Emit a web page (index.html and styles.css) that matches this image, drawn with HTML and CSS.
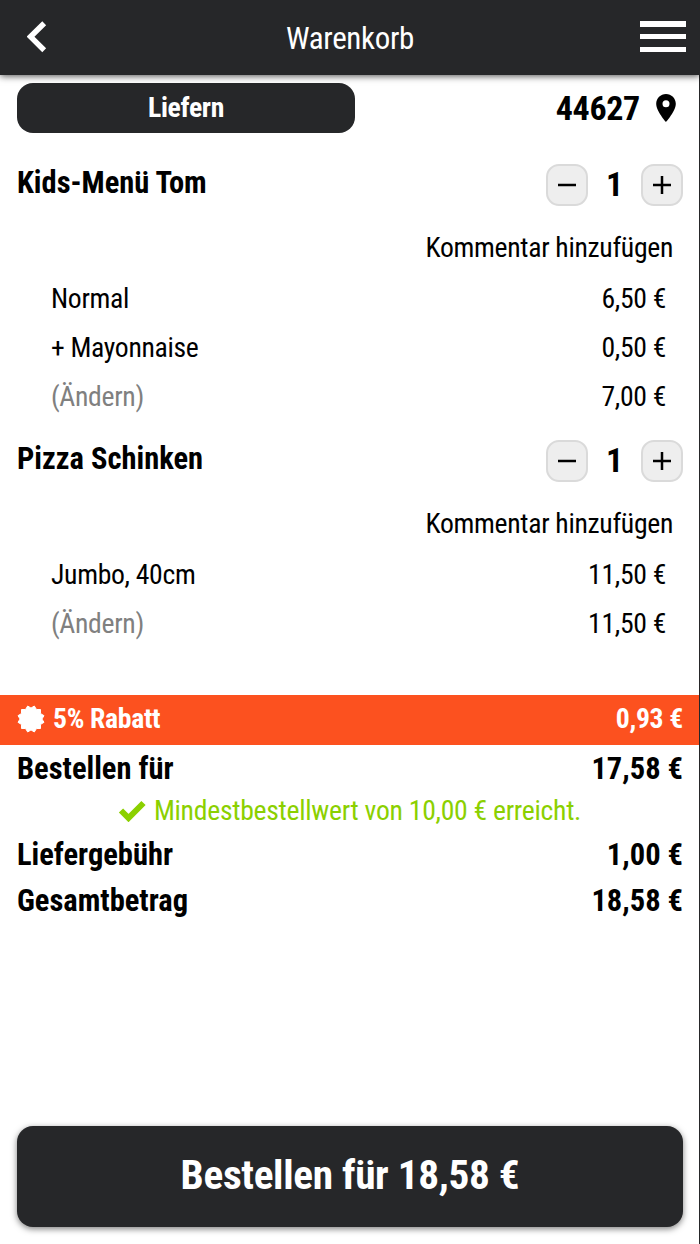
FILE: index.html
```html
<!DOCTYPE html>
<html lang="de">

<head>
    <meta charset="UTF-8">
    <meta name="viewport" content="width=device-width, initial-scale=1.0">
    <title>Warenkorb</title>
    <link rel="stylesheet" href="styles.css">
</head>

<body>
    <header class="header">
        <svg class="back" viewBox="0 0 20 32"><path d="M17.200 2.200L3.500 15.700l13.700 13.500" /></svg>
        <h1>Warenkorb</h1>
        <div class="menu"><i></i><i></i><i></i></div>
    </header>

    <main class="cart">
        <div class="delivery">
            <button class="mode">Liefern</button>
            <div class="zip">
                <span>44627</span>
                <svg class="pin" viewBox="5 2 14 20"><path d="M12 2C8.130 2 5 5.130 5 9c0 5.250 7 13 7 13s7-7.750 7-13c0-3.870-3.130-7-7-7zm0 9.500a2.500 2.500 0 1 1 0-5 2.500 2.500 0 0 1 0 5z" /></svg>
            </div>
        </div>

        <section class="item">
            <div class="item-head">
                <h2>Kids-Menü Tom</h2>
                <div class="qty">
                    <button class="step"><svg viewBox="0 0 18 18"><path d="M0 9h18" /></svg></button>
                    <span class="count">1</span>
                    <button class="step"><svg viewBox="0 0 18 18"><path d="M0 9h18M9 0v18" /></svg></button>
                </div>
            </div>
            <div class="comment">Kommentar hinzufügen</div>
            <div class="option"><span>Normal</span><span>6,50 €</span></div>
            <div class="option"><span>+ Mayonnaise</span><span>0,50 €</span></div>
            <div class="option"><span class="change">(Ändern)</span><span>7,00 €</span></div>
        </section>

        <section class="item">
            <div class="item-head">
                <h2>Pizza Schinken</h2>
                <div class="qty">
                    <button class="step"><svg viewBox="0 0 18 18"><path d="M0 9h18" /></svg></button>
                    <span class="count">1</span>
                    <button class="step"><svg viewBox="0 0 18 18"><path d="M0 9h18M9 0v18" /></svg></button>
                </div>
            </div>
            <div class="comment">Kommentar hinzufügen</div>
            <div class="option"><span>Jumbo, 40cm</span><span>11,50 €</span></div>
            <div class="option"><span class="change">(Ändern)</span><span>11,50 €</span></div>
        </section>

        <div class="discount">
            <svg class="badge" viewBox="-14 -14 28 28"><path d="M0-10.900L3.300-13 5.500-9.500 9.500-9.500 9.500-5.500 13-3.300 10.900 0 13 3.300 9.500 5.500 9.500 9.500 5.500 9.500 3.300 13 0 10.900-3.300 13-5.500 9.500-9.500 9.500-9.500 5.500-13 3.300-10.900 0-13-3.300-9.500-5.500-9.500-9.500-5.500-9.500-3.300-13z" /></svg>
            <span>5% Rabatt</span>
            <span class="amount">0,93 €</span>
        </div>

        <div class="totals">
            <div class="sum"><span>Bestellen für</span><span>17,58 €</span></div>
            <div class="minimum">
                <svg class="check" viewBox="0 0 28 22"><path d="M3 10.500l7.500 7.500L25.500 3" /></svg>
                <span>Mindestbestellwert von 10,00 € erreicht.</span>
            </div>
            <div class="sum"><span>Liefergebühr</span><span>1,00 €</span></div>
            <div class="sum"><span>Gesamtbetrag</span><span>18,58 €</span></div>
        </div>

        <button class="order">Bestellen für 18,58 €</button>
    </main>
</body>

</html>
```
FILE: styles.css
```css
* {
    box-sizing: border-box;
}

body {
    margin: 0;
    height: 1244px;
    display: flex;
    flex-direction: column;
    background: #fff;
    color: #000;
    font-family: "Roboto Condensed", Roboto, sans-serif;
    font-stretch: 75%;
    font-weight: 440;
    font-size: 27.700px;
    letter-spacing: -0.320px;
    line-height: 1.2;
    white-space: nowrap;
}

h1, h2 {
    margin: 0;
}

button {
    font: inherit;
    font-stretch: 75%;
    letter-spacing: inherit;
    border: none;
    padding: 0;
}

.header {
    position: relative;
    z-index: 1;
    height: 74.500px;
    padding: 0 14px 0 27px;
    display: flex;
    align-items: center;
    justify-content: space-between;
    background: #262729;
    color: #fff;
    box-shadow: 0 1px 7px rgba(0, 0, 0, 0.7);
}

.header h1 {
    font-size: 31px;
    font-weight: 440;
    padding: 2px 0 0 13px;
}

.back {
    width: 20px;
    height: 32px;
    fill: none;
    stroke: #fff;
    stroke-width: 5.500;
}

.menu {
    width: 46px;
    display: flex;
    flex-direction: column;
    gap: 7.200px;
    padding-bottom: 1px;
}

.menu i {
    height: 5.400px;
    background: #fff;
}

.cart {
    flex: 1;
    display: flex;
    flex-direction: column;
    border-right: 1px solid #262729;
    padding-top: 8.500px;
}

.delivery {
    height: 50px;
    margin: 0 23px 31px 17px;
    display: flex;
    align-items: center;
    justify-content: space-between;
}

.mode {
    width: 338px;
    height: 50px;
    border-radius: 16px;
    background: #262729;
    color: #fff;
    font-weight: 700;
}

.zip {
    display: flex;
    align-items: center;
    gap: 16px;
    font-size: 34px;
    font-weight: 700;
}

.pin {
    width: 20px;
    height: 28px;
}

.item {
    padding: 0 16px 0 17px;
    margin-bottom: 18.500px;
}

.item-head {
    display: flex;
    justify-content: space-between;
    height: 42px;
}

.item-head h2 {
    padding-top: 1px;
    font-size: 30.500px;
    font-weight: 700;
    letter-spacing: 0;
}

.qty {
    display: flex;
    align-items: center;
}

.step {
    width: 42px;
    height: 42px;
    display: flex;
    align-items: center;
    justify-content: center;
    border: 2px solid #dadada;
    border-radius: 13px;
    background: #eee;
}

.step svg {
    width: 18px;
    height: 18px;
    stroke: #000;
    stroke-width: 2.500;
}

.count {
    width: 53px;
    padding-bottom: 1px;
    text-align: center;
    font-size: 34px;
    font-weight: 700;
}

.comment {
    height: 50px;
    margin: 17px 10px 1px 0;
    display: flex;
    align-items: center;
    justify-content: flex-end;
}

.option {
    height: 49px;
    padding: 0 17px 0 34px;
    display: flex;
    align-items: center;
    justify-content: space-between;
}

.comment + .option {
    margin-top: 1.300px;
}

.change {
    color: #808080;
}

.discount {
    height: 50px;
    margin-top: 28px;
    padding: 0 16px 2px 17px;
    display: flex;
    align-items: center;
    gap: 8px;
    background: #fc511f;
    color: #fff;
    font-weight: 700;
}

.badge {
    width: 28px;
    height: 28px;
    fill: #fff;
    stroke: #fff;
    stroke-linejoin: round;
}

.amount {
    margin-left: auto;
}

.totals {
    padding-top: 2px;
}

.sum {
    height: 46px;
    padding: 0 16px 0 17px;
    display: flex;
    align-items: center;
    justify-content: space-between;
    font-size: 30.500px;
    font-weight: 700;
    letter-spacing: 0;
}

.minimum {
    height: 40px;
    padding-bottom: 3px;
    display: flex;
    align-items: center;
    justify-content: center;
    gap: 8px;
    color: #8bd000;
    letter-spacing: -0.280px;
}

.check {
    width: 28px;
    height: 22px;
    fill: none;
    stroke: #8bd000;
    stroke-width: 6;
}

.order {
    height: 101px;
    margin: auto 16px 17.500px 17px;
    border-radius: 16px;
    background: #262729;
    color: #fff;
    font-size: 41.300px;
    font-weight: 700;
    box-shadow: 0 2px 6px rgba(0, 0, 0, 0.5);
}
```
